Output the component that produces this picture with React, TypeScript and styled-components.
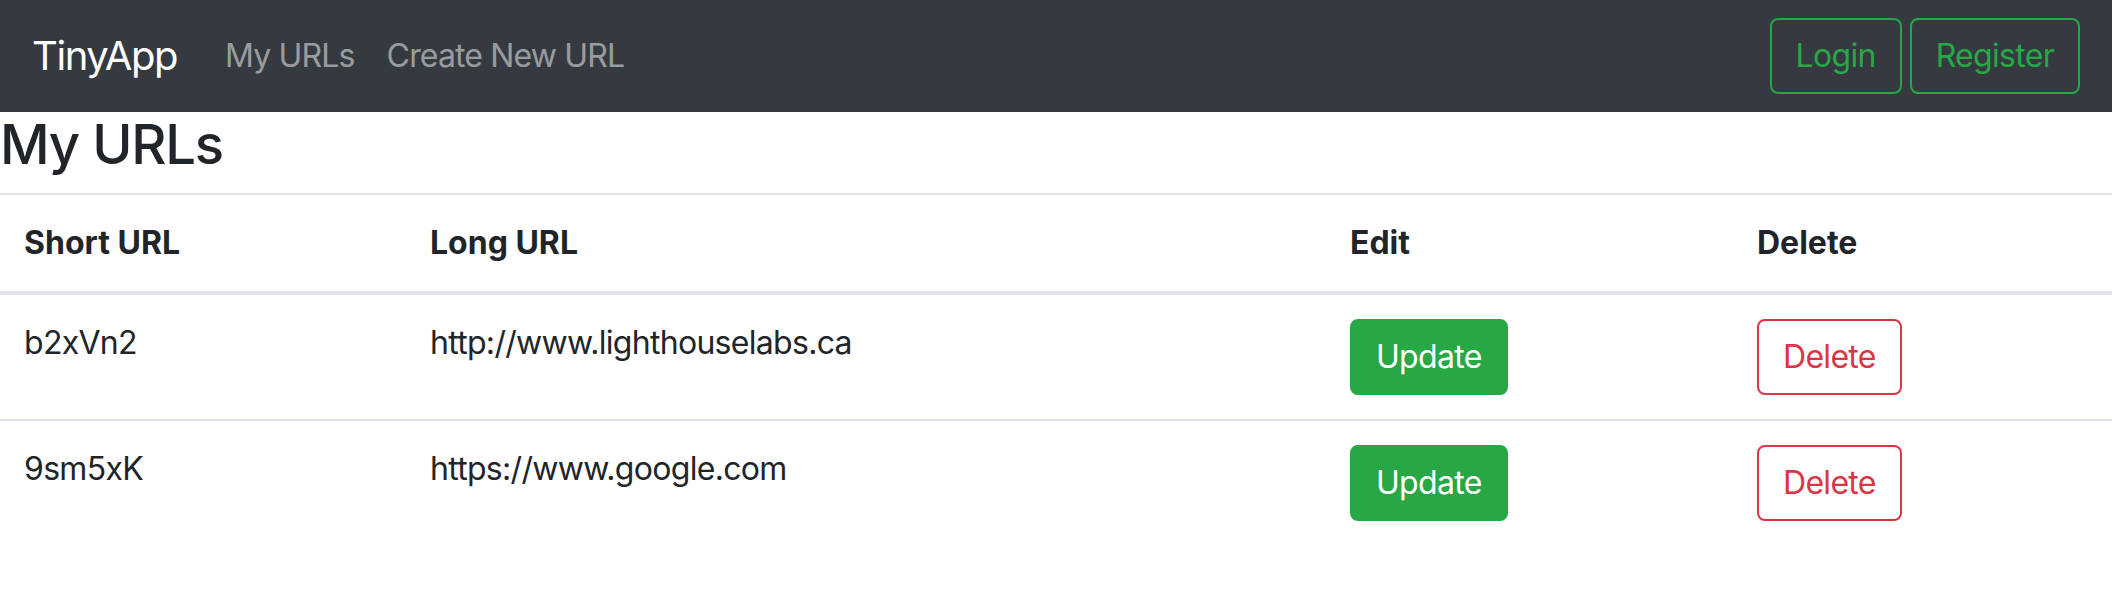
import React from "react";
import styled, { createGlobalStyle } from "styled-components";

const GlobalStyle = createGlobalStyle`
  * { box-sizing: border-box; }
  body {
    margin: 0;
    font-family: Inter, "Liberation Sans", Arial, sans-serif;
    font-size: 32px;
    line-height: 1.5;
    letter-spacing: -0.7px;
    color: #212529;
    background: #fff;
  }
`;

const Navbar = styled.nav`
  display: flex;
  align-items: center;
  justify-content: space-between;
  padding: 16px 32px;
  background: #343a40;
`;

const NavLeft = styled.div`
  display: flex;
  align-items: center;
`;

const Brand = styled.a`
  font-size: 40px;
  line-height: 1.5;
  letter-spacing: -1.4px;
  padding: 10px 0;
  margin-right: 32px;
  color: #fff;
  text-decoration: none;
`;

const NavLink = styled.a`
  display: block;
  padding: 16px;
  font-size: 32px;
  line-height: 48px;
  letter-spacing: -0.85px;
  color: rgba(255, 255, 255, 0.5);
  text-decoration: none;
`;

const NavRight = styled.div`
  display: flex;
  align-items: center;
  gap: 8px;
`;

const Button = styled.button<{ $tone: string; $solid?: boolean }>`
  font-family: inherit;
  font-size: 32px;
  line-height: 48px;
  letter-spacing: -0.7px;
  font-weight: 400;
  padding: 12px 24px;
  border-radius: 8px;
  border: 2px solid ${(p) => p.$tone};
  background: ${(p) => (p.$solid ? p.$tone : "transparent")};
  color: ${(p) => (p.$solid ? "#fff" : p.$tone)};
  cursor: pointer;
`;

const Title = styled.h1`
  margin: 0 0 16px;
  font-size: 54.4px;
  font-weight: 500;
  line-height: 1.2;
  letter-spacing: -1.2px;
`;

const Table = styled.table`
  width: 100%;
  border-collapse: collapse;
  margin-bottom: 32px;
`;

const HeadCell = styled.th<{ $w?: number }>`
  width: ${(p) => (p.$w ? `${p.$w}px` : "auto")};
  text-align: left;
  font-weight: 700;
  letter-spacing: 0px;
  padding: 24px;
  vertical-align: bottom;
  border-top: 2px solid #dee2e6;
  border-bottom: 4px solid #dee2e6;
`;

const Cell = styled.td`
  padding: 24px;
  vertical-align: top;
  border-top: 2px solid #dee2e6;
`;

const rows = [
  { short: "b2xVn2", long: "http://www.lighthouselabs.ca" },
  { short: "9sm5xK", long: "https://www.google.com" },
];

export default function App() {
  return (
    <>
      <GlobalStyle />
      <Navbar>
        <NavLeft>
          <Brand href="#">TinyApp</Brand>
          <NavLink href="#">My URLs</NavLink>
          <NavLink href="#">Create New URL</NavLink>
        </NavLeft>
        <NavRight>
          <Button $tone="#28a745">Login</Button>
          <Button $tone="#28a745">Register</Button>
        </NavRight>
      </Navbar>
      <Title>My URLs</Title>
      <Table>
        <thead>
          <tr>
            <HeadCell $w={406}>Short URL</HeadCell>
            <HeadCell $w={920}>Long URL</HeadCell>
            <HeadCell $w={407}>Edit</HeadCell>
            <HeadCell>Delete</HeadCell>
          </tr>
        </thead>
        <tbody>
          {rows.map((r) => (
            <tr key={r.short}>
              <Cell>{r.short}</Cell>
              <Cell>{r.long}</Cell>
              <Cell>
                <Button $tone="#28a745" $solid>
                  Update
                </Button>
              </Cell>
              <Cell>
                <Button $tone="#dc3545">Delete</Button>
              </Cell>
            </tr>
          ))}
        </tbody>
      </Table>
    </>
  );
}
